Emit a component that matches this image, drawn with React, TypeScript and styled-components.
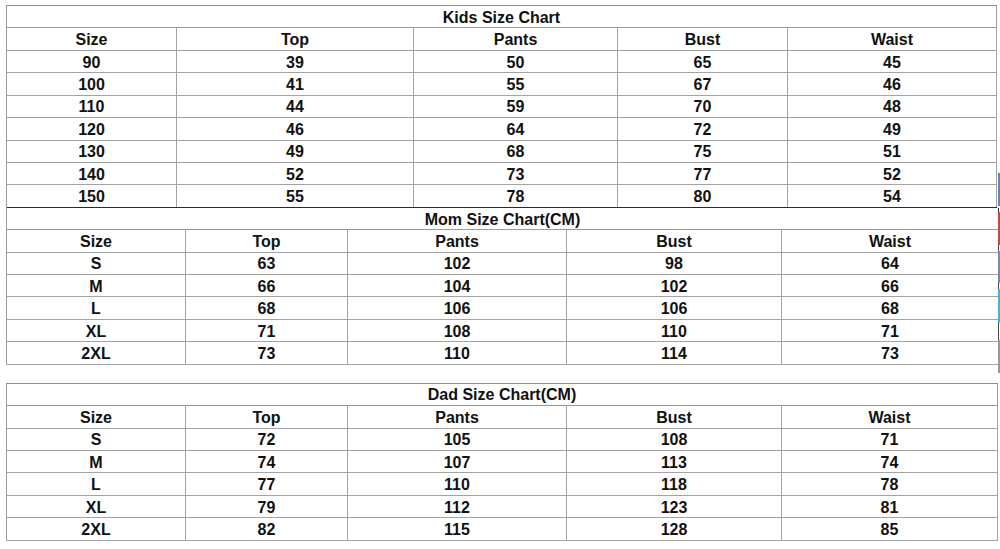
import React from 'react';
import styled, { createGlobalStyle } from 'styled-components';

const GlobalStyle = createGlobalStyle`
  html, body {
    margin: 0;
    padding: 0;
    background: #ffffff;
  }
  body {
    font-family: "Liberation Sans", Arial, sans-serif;
    color: #111111;
  }
`;

const Page = styled.div`
  display: flex;
  width: 1000px;
  height: 549px;
  overflow: hidden;
  background: #fff;
`;

const Charts = styled.div`
  width: 992px;
  padding: 5px 0 0 6px;
  display: flex;
  flex-direction: column;
`;

const Chart = styled.div<{ width: number; top?: boolean; gap?: number }>`
  width: ${p => p.width}px;
  box-sizing: border-box;
  border-left: 1px solid #9a9a9a;
  border-top: ${p => (p.top ? '1px solid #8f8f8f' : 'none')};
  margin-top: ${p => p.gap || 0}px;
`;

const TitleRow = styled.div<{ dark?: boolean }>`
  height: 22.43px;
  box-sizing: border-box;
  padding-top: 2px;
  display: flex;
  align-items: center;
  justify-content: center;
  font-size: 16px;
  font-weight: 700;
  border-right: 1px solid ${p => (p.dark ? '#333' : '#9a9a9a')};
  border-bottom: 1px solid #9a9a9a;
`;

const Row = styled.div<{ cols: string; last?: boolean }>`
  display: grid;
  grid-template-columns: ${p => p.cols};
  height: 22.43px;
  box-sizing: border-box;
  border-bottom: 1px solid ${p => (p.last ? '#2a2a2a' : '#a3a3a3')};
`;

const Cell = styled.div<{ edge?: boolean }>`
  display: flex;
  align-items: center;
  justify-content: center;
  padding-top: 2px;
  box-sizing: border-box;
  font-size: 16px;
  font-weight: 700;
  border-right: 1px solid ${p => (p.edge ? '#444' : '#a3a3a3')};
  white-space: nowrap;
`;

const SideStrip = styled.div`
  width: 2px;
  padding-top: 173px;
  display: flex;
  flex-direction: column;
`;

const Sliver = styled.div<{ color: string; h: number; gap: number }>`
  width: 2px;
  height: ${p => p.h}px;
  margin-top: ${p => p.gap}px;
  background: ${p => p.color};
`;

type ChartData = {
  title: string;
  cols: string;
  width: number;
  rows: string[][];
};

const header = ['Size', 'Top', 'Pants', 'Bust', 'Waist'];

const kids: ChartData = {
  title: 'Kids Size Chart',
  cols: '170px 237px 204px 170px 209px',
  width: 991,
  rows: [
    ['90', '39', '50', '65', '45'],
    ['100', '41', '55', '67', '46'],
    ['110', '44', '59', '70', '48'],
    ['120', '46', '64', '72', '49'],
    ['130', '49', '68', '75', '51'],
    ['140', '52', '73', '77', '52'],
    ['150', '55', '78', '80', '54'],
  ],
};

const mom: ChartData = {
  title: 'Mom Size Chart(CM)',
  cols: '179px 162px 219px 215px 217px',
  width: 993,
  rows: [
    ['S', '63', '102', '98', '64'],
    ['M', '66', '104', '102', '66'],
    ['L', '68', '106', '106', '68'],
    ['XL', '71', '108', '110', '71'],
    ['2XL', '73', '110', '114', '73'],
  ],
};

const dad: ChartData = {
  title: 'Dad Size Chart(CM)',
  cols: '179px 162px 219px 215px 216px',
  width: 992,
  rows: [
    ['S', '72', '105', '108', '71'],
    ['M', '74', '107', '113', '74'],
    ['L', '77', '110', '118', '78'],
    ['XL', '79', '112', '123', '81'],
    ['2XL', '82', '115', '128', '85'],
  ],
};

function SizeChart({ data, top, gap, lastDark, edgeDark }: { data: ChartData; top?: boolean; gap?: number; lastDark?: boolean; edgeDark?: boolean }) {
  const all = [header, ...data.rows];
  return (
    <Chart width={data.width} top={top} gap={gap}>
      <TitleRow dark={edgeDark}>{data.title}</TitleRow>
      {all.map((r, i) => (
        <Row key={i} cols={data.cols} last={lastDark && i === all.length - 1}>
          {r.map((c, j) => (
            <Cell key={j} edge={edgeDark && j === r.length - 1}>{c}</Cell>
          ))}
        </Row>
      ))}
    </Chart>
  );
}

export default function App() {
  return (
    <Page>
      <GlobalStyle />
      <Charts>
        <SizeChart data={kids} top lastDark />
        <SizeChart data={mom} edgeDark />
        <SizeChart data={dad} top gap={18} />
      </Charts>
      <SideStrip>
        <Sliver color="#6f82b3" h={33} gap={0} />
        <Sliver color="#c24a48" h={33} gap={6} />
        <Sliver color="#7a89ad" h={32} gap={6} />
        <Sliver color="#3db8cc" h={34} gap={6} />
        <Sliver color="#9a9a9a" h={33} gap={17} />
      </SideStrip>
    </Page>
  );
}
